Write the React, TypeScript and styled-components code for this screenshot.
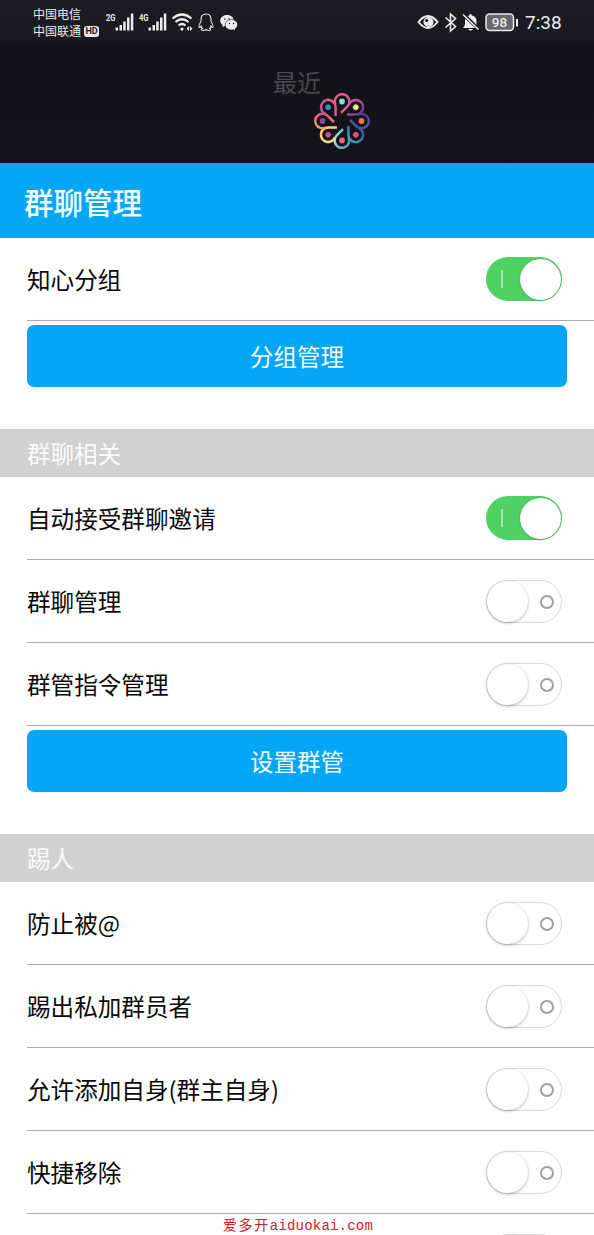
import React from 'react';
import styled, { createGlobalStyle } from 'styled-components';

const Global = createGlobalStyle`
  * { box-sizing: border-box; }
  html, body { margin: 0; padding: 0; background: #fefefe; overflow: hidden; }
  body { font-family: "Noto Sans CJK SC", sans-serif; }
`;

const Screen = styled.div`
  position: relative;
  width: 594px;
  height: 1235px;
  overflow: hidden;
  background: #fefefe;
`;

const Top = styled.header`
  height: 163px;
  background: linear-gradient(180deg, #1c1b21 0, #1b1a20 38px, #131218 46px, #15141b 100%);
`;

const StatusBar = styled.div`
  display: flex;
  align-items: flex-start;
  height: 44px;
  padding: 5px 32px 0 33px;
  color: #ececee;
`;

const Carriers = styled.div`
  display: flex;
  flex-direction: column;
  width: 73px;
  font-size: 12px;
  line-height: 17px;
`;

const CarrierLine = styled.div`
  display: flex;
  align-items: center;
  gap: 3px;
  height: 17px;
  white-space: nowrap;
`;

const HdTag = styled.span`
  width: 15px;
  height: 11px;
  margin-top: 1px;
  border-radius: 3px;
  background: #ececee;
  color: #17161c;
  font: 700 9px/11px Roboto, sans-serif;
  text-align: center;
`;

const Icon = styled.svg`
  display: block;
  flex: none;
  margin-top: 1px;
  overflow: visible;
`;

const Spacer = styled.div`
  flex: 1;
`;

const Clock = styled.span`
  width: 37px;
  margin-left: 7px;
  font: 400 19px/36px Roboto, sans-serif;
  white-space: nowrap;
`;

const Recent = styled.div`
  display: flex;
  flex-direction: column;
  align-items: center;
  height: 119px;
  padding-top: 22px;
  color: #4a494d;
  font-size: 24px;
  line-height: 32px;
`;

const LogoRow = styled.div`
  margin: -7px 0 0 90px;
`;

const TitleBar = styled.h1`
  display: flex;
  align-items: center;
  height: 75px;
  margin: 0;
  padding: 0 24px;
  background: #06a6f7;
  color: #f4fcff;
  font-size: 29.5px;
  font-weight: 500;
`;

const Row = styled.label`
  display: flex;
  align-items: center;
  justify-content: space-between;
  height: 83px;
  margin-left: 27px;
  padding-right: 32px;
  border-bottom: 1px solid #aaa;
  color: #090909;
  font-size: 23.6px;
  line-height: 34px;
`;

const Track = styled.span<{ $on?: boolean }>`
  display: flex;
  align-items: center;
  justify-content: space-between;
  flex-direction: ${p => (p.$on ? 'row-reverse' : 'row')};
  width: 76px;
  height: ${p => (p.$on ? '44px' : '43px')};
  margin-top: ${p => (p.$on ? '0' : '1px')};
  padding-right: ${p => (p.$on ? '1px' : '7px')};
  padding-left: ${p => (p.$on ? '15px' : '0')};
  border-radius: 22px;
  border: ${p => (p.$on ? '0' : '1px solid #d8d8d8')};
  background: ${p => (p.$on ? '#50d164' : '#fefefe')};
`;

const Knob = styled.span<{ $on?: boolean }>`
  width: 41px;
  height: 41px;
  border-radius: 50%;
  background: #fefefe;
  box-shadow: ${p => (p.$on ? '0 .5px 1.5px #3d7f49' : '0 1px 3px rgba(0,0,0,.3)')};
`;

const Mark = styled.span<{ $on?: boolean }>`
  width: ${p => (p.$on ? '2px' : '14px')};
  height: ${p => (p.$on ? '18px' : '14px')};
  border: ${p => (p.$on ? '0' : '2px solid #a0a0a0')};
  border-radius: ${p => (p.$on ? '0' : '50%')};
  background: ${p => (p.$on ? '#a4e8ae' : 'transparent')};
`;

const Action = styled.button`
  display: block;
  width: 540px;
  height: 62px;
  margin: 4px 27px 42px;
  padding: 0;
  border: 0;
  border-radius: 7px;
  background: #06a6f7;
  color: #f4fcff;
  font-family: inherit;
  font-size: 23.5px;
  line-height: 62px;
`;

const Section = styled.h2`
  height: 48px;
  margin: 0;
  padding-left: 27px;
  background: #d1d1d1;
  color: #fbfbfb;
  font-size: 23.5px;
  font-weight: 400;
  line-height: 49px;
`;

const Watermark = styled.div`
  position: absolute;
  left: 223px;
  top: 1216px;
  display: flex;
  color: #d0202a;
  font: 14px/20px "Liberation Mono", "Noto Sans CJK SC", monospace;
`;

const WatermarkName = styled.span`
  letter-spacing: 1.6px;
`;

const WatermarkDomain = styled.span`
  letter-spacing: 0.2px;
`;

function Toggle({ on }: { on?: boolean }) {
  return (
    <Track $on={on}>
      <Knob $on={on} />
      <Mark $on={on} />
    </Track>
  );
}

function Setting({ label, on }: { label: string; on?: boolean }) {
  return (
    <Row>
      <span>{label}</span>
      <Toggle on={on} />
    </Row>
  );
}

function Signal({ label }: { label: string }) {
  return (
    <Icon width="33" height="34" viewBox="0 0 33 34" fill="#ececee">
      <text x="0" y="14.5" fontFamily="Roboto" fontSize="9.5" fontWeight="700" textLength="9.5" lengthAdjust="spacingAndGlyphs">{label}</text>
      <rect x="9.5" y="21.5" width="2.5" height="3" />
      <rect x="13.5" y="19" width="2.5" height="5.5" />
      <rect x="17.2" y="15.5" width="2.5" height="9" />
      <rect x="21" y="11.5" width="2.5" height="13" />
      <rect x="24.8" y="7.5" width="2.5" height="17" />
    </Icon>
  );
}

// Each petal, clockwise from the top: gradient start, gradient end, dot.
const petals = [
  ['#ea5c7c', '#d8589c', '#7fe0d0'],
  ['#d0559c', '#6d3f90', '#f2e08a'],
  ['#5f3789', '#3c62a6', '#f0764e'],
  ['#33589c', '#35a6b4', '#dd4f86'],
  ['#3aa3b5', '#93ddd6', '#ee6488'],
  ['#f6e287', '#f8c878', '#b94d96'],
  ['#f6a35e', '#ea5566', '#7b4da0'],
  ['#b9509f', '#ec5c84', '#2e8fae'],
];

function Logo() {
  return (
    <Icon width="58" height="58" viewBox="-29 -29 58 58" fill="none">
      <defs>
        {petals.map(([a, b], i) => (
          <linearGradient key={i} id={`petal${i}`} gradientUnits="userSpaceOnUse" x1="-8" x2="8" y1="-20" y2="-18">
            <stop offset="0" stopColor={a} />
            <stop offset="1" stopColor={b} />
          </linearGradient>
        ))}
      </defs>
      {petals.map(([, , dot], i) => (
        <g key={i} transform={`rotate(${i * 45})`}>
          <path d="M-6.600-16.500A7.300 7.300 0 1 1 5.200-14.300L-1-8.100" stroke={`url(#petal${i})`} strokeWidth="2.500" />
          <circle cy="-19.500" r="2.900" fill={dot} />
        </g>
      ))}
    </Icon>
  );
}

export default function App() {
  return (
    <Screen>
      <Global />
      <Top>
        <StatusBar>
          <Carriers>
            <CarrierLine>中国电信</CarrierLine>
            <CarrierLine>中国联通<HdTag>HD</HdTag></CarrierLine>
          </Carriers>
          <Signal label="2G" />
          <Signal label="4G" />
          <Icon width="72" height="34" viewBox="172 6 72 34" fill="none" stroke="#ececee" strokeWidth="2.200">
            <path d="M172.500 18.500q9.500-8 19 0M175.500 22q6.500-5.500 13 0M178.500 25.500q3.500-3 7 0" />
            <circle cx="182" cy="29" r="1.600" fill="#ececee" stroke="none" />
            <path d="M186.500 28.500l2.500-2.500v5zM190 26v5l2.500-2.500z" fill="#ececee" stroke="none" />
            <path d="M206 14c-3 0-5 2.300-5 5.500v2c-1.500 2-2.300 4-2 5.500.5.800 1.300 0 2-1 .3 1.200.8 2 1.500 2.600-1.500.6-1.500 1.900.5 1.900 1.500 0 2.500-.5 3-1 .5.500 1.500 1 3 1 2 0 2-1.300.5-1.900.7-.6 1.200-1.400 1.500-2.600.7 1 1.500 1.800 2 1 .3-1.500-.5-3.500-2-5.500v-2c0-3.200-2-5.500-5-5.500z" strokeWidth="1.100" />
            <g stroke="none" fill="#ececee">
              <path d="M227 15c-4 0-6.800 2.500-6.800 5.700 0 1.900 1 3.400 2.600 4.500l-.6 2 2.400-1.200q1.200.3 2.400.3c4 0 6.800-2.500 6.800-5.600S231 15 227 15z" />
              <path stroke="#17161c" strokeWidth=".6" d="M231.500 19.500c-3.600 0-6.400 2.300-6.400 5.300s2.800 5.200 6.400 5.200q1 0 2-.3l2 1.100-.5-1.800c1.600-1 2.600-2.500 2.600-4.200 0-3-2.800-5.300-6.100-5.300z" />
              <g fill="#17161c"><circle cx="224.800" cy="19" r=".8" /><circle cx="229" cy="19" r=".8" /><circle cx="229.500" cy="23.500" r=".7" /><circle cx="233.500" cy="23.500" r=".7" /></g>
            </g>
          </Icon>
          <Spacer />
          <Icon width="101" height="34" viewBox="418 6 101 34" fill="none" stroke="#ececee" strokeWidth="2">
            <path d="M419.500 22q9.500-12 19 0-9.500 12-19 0z" />
            <circle cx="429.500" cy="22" r="5" fill="#ececee" stroke="none" />
            <circle cx="427.700" cy="20.500" r="1.600" fill="#17161c" stroke="none" />
            <path d="M446.500 17.500l10 9-5 4.500V14l5 4.500-10 9" strokeWidth="1.600" />
            <path d="M464 28q2-2 2-4v-3c0-3 2-5 4-5.500a1.500 1.500 0 0 1 3 0c3 .7 4.500 3 4.500 5.500v3q0 2 2 4zM469 29h5q-2.500 3-5 0z" fill="#ececee" stroke="none" />
            <path d="M464 14l16 15.500" stroke="#17161c" strokeWidth="3.500" />
            <path d="M464 14.500l15.500 15" strokeWidth="1.600" />
            <rect x="487" y="14" width="27.500" height="16.500" rx="3.500" fill="#68676b" strokeWidth="1.500" />
            <path d="M518 19v7.500" />
            <text x="500.500" y="27" fontFamily="Roboto" fontSize="13.500" fontWeight="500" textAnchor="middle" fill="#ececee" stroke="none">98</text>
          </Icon>
          <Clock>7:38</Clock>
        </StatusBar>
        <Recent>
          <span>最近</span>
          <LogoRow><Logo /></LogoRow>
        </Recent>
      </Top>
      <TitleBar>群聊管理</TitleBar>
      <Setting label="知心分组" on />
      <Action>分组管理</Action>
      <Section>群聊相关</Section>
      <Setting label="自动接受群聊邀请" on />
      <Setting label="群聊管理" />
      <Setting label="群管指令管理" />
      <Action>设置群管</Action>
      <Section>踢人</Section>
      <Setting label="防止被@" />
      <Setting label="踢出私加群员者" />
      <Setting label="允许添加自身(群主自身)" />
      <Setting label="快捷移除" />
      <Setting label="" />
      <Watermark>
        <WatermarkName>爱多开</WatermarkName>
        <WatermarkDomain>aiduokai.com</WatermarkDomain>
      </Watermark>
    </Screen>
  );
}
